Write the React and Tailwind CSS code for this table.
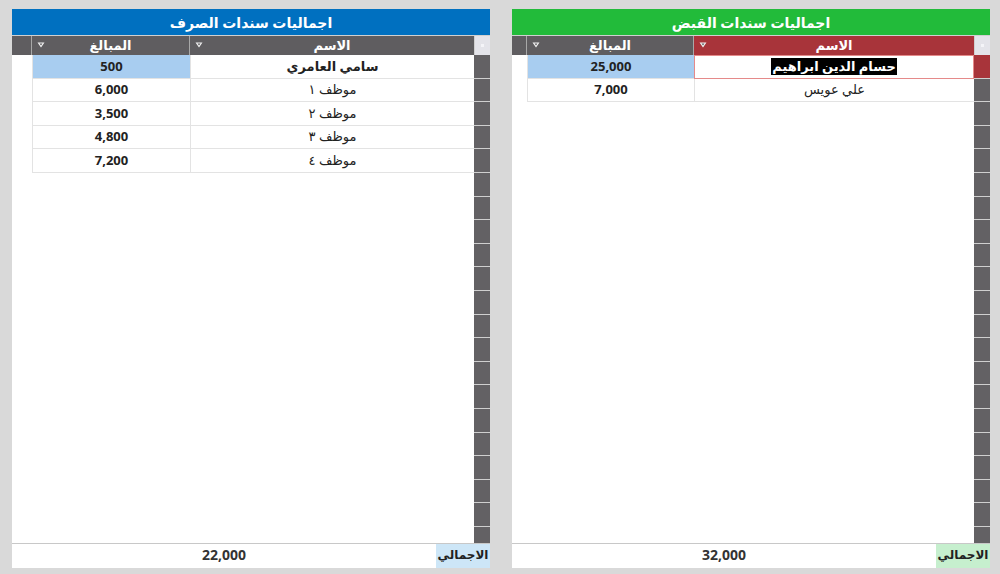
import React from "react";

const FONT = { fontFamily: '"Noto Sans", "DejaVu Sans", sans-serif' };

function Tri() {
  return (
    <svg width="8" height="6" viewBox="0 0 8 6" className="shrink-0">
      <polygon points="0.5,0.5 7.5,0.5 4,5.5" fill="#f2f2f2" />
      <polygon points="2.5,1.5 5.5,1.5 4,3.6" fill="#5f5d60" />
    </svg>
  );
}

function Panel({ title, titleBg, padW, amtW, nameW, nameHeadBg, rows, total, totalBg, highlightFirst }) {
  const stripes = Array.from({ length: 21 });
  return (
    <div className="flex flex-col w-[478px] h-[559px]">
      <div
        className={`h-[27px] flex items-center justify-center text-white text-[14px] font-semibold border-b border-[#d0d0d0] ${titleBg}`}
        dir="rtl"
      >
        {title}
      </div>
      <div className="h-[19px] flex bg-[#5f5d60]">
        <div className={`${padW} border-r border-[#a8a8a8]`} />
        <div className={`${amtW} relative flex items-center justify-center border-r border-[#a8a8a8] text-white text-[13px] font-bold`}>
          <span className="absolute left-[5px] top-[6px]"><Tri /></span>
          <span dir="rtl">المبالغ</span>
        </div>
        <div className={`${nameW} relative flex items-center justify-center text-white text-[13px] font-bold ${nameHeadBg}`}>
          <span className="absolute left-[5px] top-[6px]"><Tri /></span>
          <span dir="rtl">الاسم</span>
        </div>
        <div className="w-[16px] bg-[#e4e4ea] border-l border-[#cfcfcf] flex items-center justify-center">
          <div className="w-[3px] h-[3px] bg-[#f4f4f8]" />
        </div>
      </div>
      <div className="flex-1 flex overflow-hidden bg-white">
        <div className={padW} />
        <div className="flex flex-col">
          {rows.map((r, i) => {
            const first = i === 0;
            return (
              <div key={i} className="flex h-[23.6px]">
                <div
                  className={`${amtW} flex items-center justify-center border-l border-b border-[#e3e3e3] text-[13px] font-bold text-[#222] ${first ? "bg-[#a8cdf0]" : ""}`}
                >
                  {r[1]}
                </div>
                <div
                  className={`${nameW} flex items-center justify-center text-[13px] text-[#222] ${
                    first && highlightFirst
                      ? "border border-[#e58a8a]"
                      : "border-l border-b border-[#e3e3e3]"
                  } ${first ? "font-bold" : ""}`}
                  dir="rtl"
                >
                  {first && highlightFirst ? (
                    <span className="bg-black text-white leading-[17px] px-[1px]">{r[0]}</span>
                  ) : (
                    r[0]
                  )}
                </div>
              </div>
            );
          })}
        </div>
        <div className="flex-1" />
        <div className="w-[16px] flex flex-col">
          {stripes.map((_, i) => (
            <div
              key={i}
              className={`h-[23.6px] shrink-0 border-b border-[#cfcfcf] ${
                i === 0 && highlightFirst ? "bg-[#a8343a]" : "bg-[#636164]"
              }`}
            />
          ))}
        </div>
      </div>
      <div className="h-[25px] flex border-t border-[#c8c8c8]">
        <div className="flex-1 bg-white flex items-center justify-center pb-[3px] text-[14px] font-bold text-[#333]">
          {total}
        </div>
        <div
          className={`w-[54px] flex items-center justify-center pb-[2px] text-[12px] font-semibold text-[#222] ${totalBg}`}
          dir="rtl"
        >
          الاجمالي
        </div>
      </div>
    </div>
  );
}

export default function App() {
  return (
    <div className="w-[1000px] h-[574px] bg-[#d9d9d9] flex gap-[22px] pl-[12px] pt-[9px] overflow-hidden" style={FONT}>
      <Panel
        title="اجماليات سندات الصرف"
        titleBg="bg-[#0070c0]"
        padW="w-[20px]"
        amtW="w-[158px]"
        nameW="w-[284px]"
        nameHeadBg=""
        rows={[
          ["سامي العامري", "500"],
          ["موظف ١", "6,000"],
          ["موظف ٢", "3,500"],
          ["موظف ٣", "4,800"],
          ["موظف ٤", "7,200"],
        ]}
        total="22,000"
        totalBg="bg-[#cde6f7]"
        highlightFirst={false}
      />
      <Panel
        title="اجماليات سندات القبض"
        titleBg="bg-[#22bb3a]"
        padW="w-[15px]"
        amtW="w-[167px]"
        nameW="w-[280px]"
        nameHeadBg="bg-[#a8343a]"
        rows={[
          ["حسام الدين ابراهيم", "25,000"],
          ["علي عويس", "7,000"],
        ]}
        total="32,000"
        totalBg="bg-[#c6efce]"
        highlightFirst={true}
      />
    </div>
  );
}
